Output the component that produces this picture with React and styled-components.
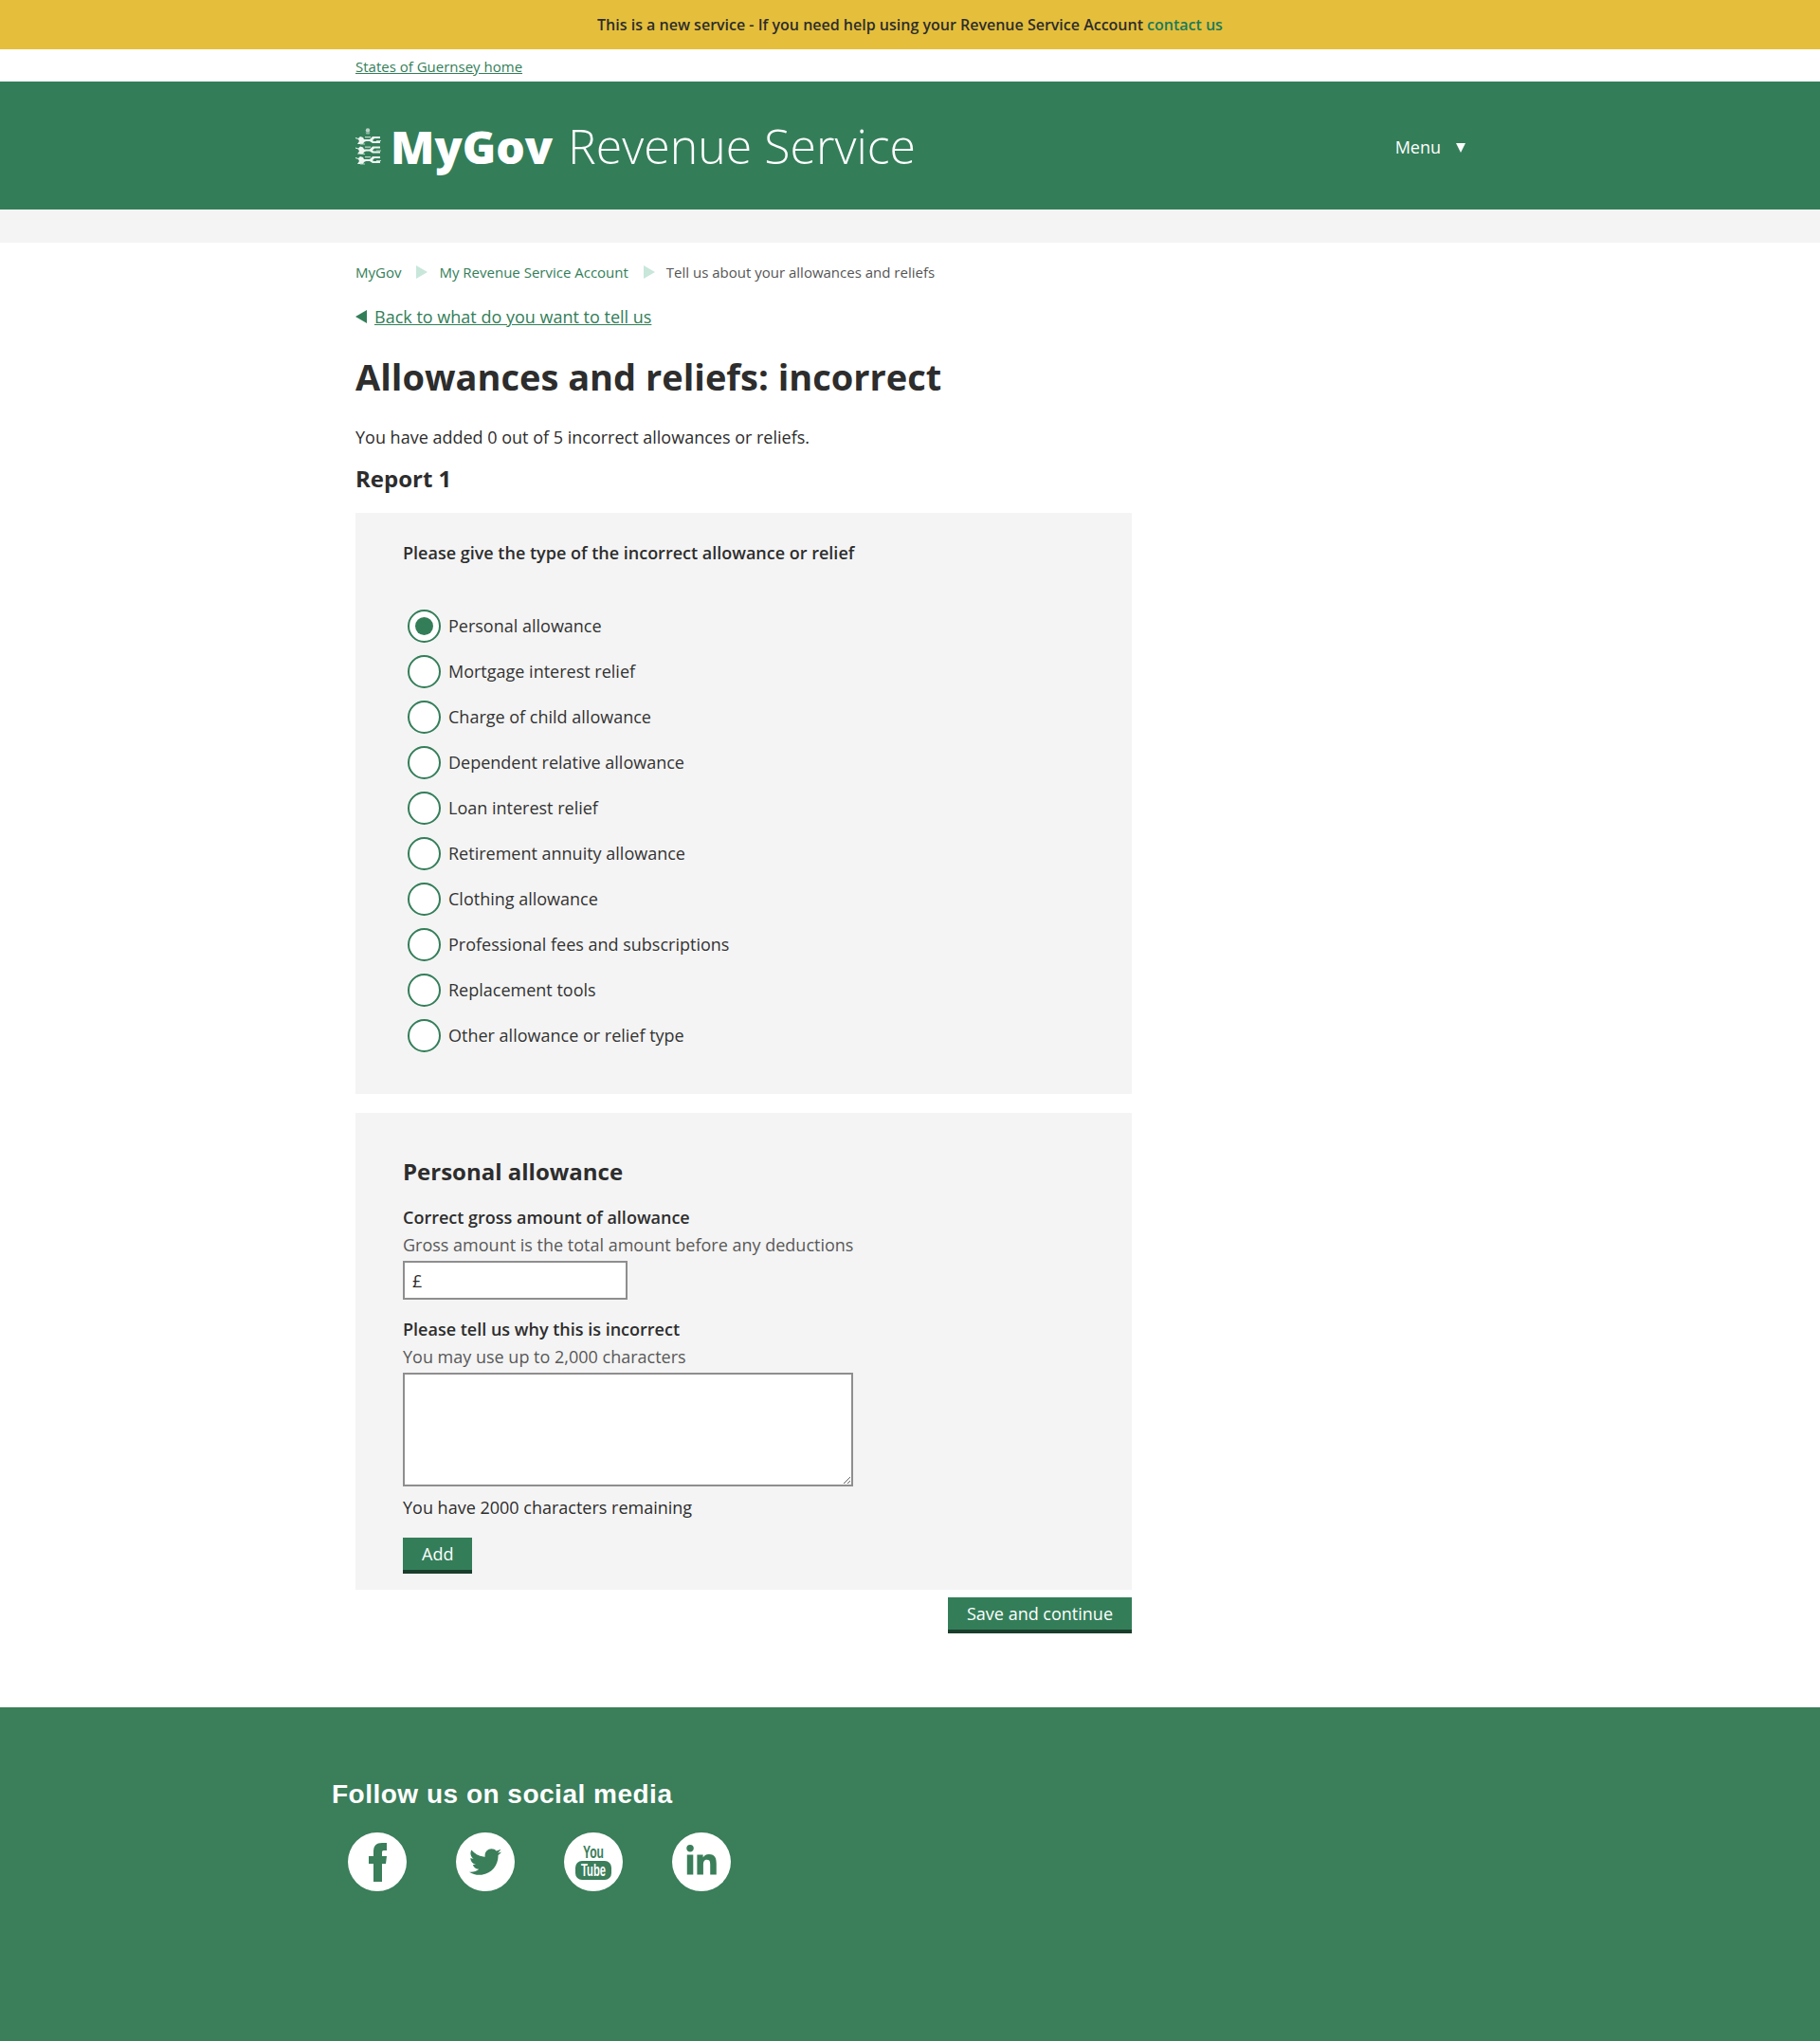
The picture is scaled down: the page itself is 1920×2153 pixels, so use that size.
import React from 'react';
import styled, { createGlobalStyle } from 'styled-components';
import { FaTwitter, FaLinkedinIn } from 'react-icons/fa';

const GlobalStyle = createGlobalStyle`
  html, body { margin: 0; padding: 0; background: #fff; }
  body { font-family: "Open Sans", "Liberation Sans", sans-serif; color: #2d2d2d; }
  * { box-sizing: border-box; }
`;

const green = '#337e59';
const panelGrey = '#f4f4f4';

const Banner = styled.div`
  height: 52px;
  background: #e5bf3b;
  display: flex;
  align-items: center;
  justify-content: center;
  font-size: 16px;
  font-weight: 600;
  color: #2d2d2d;
  a { color: #1b7a5a; text-decoration: none; margin-left: 4px; }
`;

const Wrap = styled.div`
  width: 1170px;
  margin-left: 375px;
`;

const TopLinkRow = styled.div`
  height: 34px;
  display: flex;
  align-items: flex-end;
  padding-bottom: 6px;
  font-size: 15px;
  line-height: 20px;
  a { color: ${green}; }
`;

const Header = styled.header`
  height: 135px;
  background: ${green};
  color: #fff;
`;

const HeaderInner = styled(Wrap)`
  height: 100%;
  display: flex;
  align-items: center;
  justify-content: space-between;
`;

const Logo = styled.div`
  display: flex;
  align-items: center;
  gap: 10px;
  padding-top: 2px;
  font-size: 50px;
  line-height: 60px;
  font-weight: 300;
  white-space: nowrap;
  b { font-size: 48px; font-weight: 800; margin-right: 3px; }
`;

const Menu = styled.div`
  display: flex;
  align-items: center;
  gap: 16px;
  padding-top: 2px;
  font-size: 18px;
  margin-right: -1px;
  &::after {
    content: '';
    margin-top: 2px;
    border-left: 5.5px solid transparent;
    border-right: 5.5px solid transparent;
    border-top: 10px solid #fff;
  }
`;

const GreyStrip = styled.div`
  height: 35px;
  background: ${panelGrey};
`;

const Breadcrumbs = styled.nav`
  display: flex;
  align-items: center;
  height: 22px;
  margin-top: 20px;
  font-size: 15px;
  color: #555;
  a { color: ${green}; text-decoration: none; }
`;

const CrumbArrow = styled.span`
  margin: 0 12px 0 16px;
  border-top: 7px solid transparent;
  border-bottom: 7px solid transparent;
  border-left: 12px solid #c8e6da;
`;

const BackLink = styled.div`
  display: flex;
  align-items: center;
  gap: 8px;
  margin-top: 23px;
  height: 26px;
  font-size: 18px;
  a { color: ${green}; }
  &::before {
    content: '';
    border-top: 7px solid transparent;
    border-bottom: 7px solid transparent;
    border-right: 12px solid ${green};
  }
`;

const Title = styled.h1`
  margin: 25px 0 0;
  font-size: 38px;
  line-height: 50px;
  font-weight: 700;
  color: #2d2d2d;
`;

const Lead = styled.p`
  margin: 26px 0 0;
  font-size: 18px;
  line-height: 26px;
`;

const ReportTitle = styled.h2`
  margin: 15px 0 0;
  font-size: 24px;
  line-height: 32px;
  font-weight: 700;
`;

const Panel = styled.section`
  width: 819px;
  background: ${panelGrey};
  padding: ${p => p.$padding};
  margin-top: ${p => p.$top}px;
`;

const Question = styled.div`
  font-size: 18px;
  line-height: 26px;
  font-weight: 600;
  margin-bottom: 46px;
`;

const RadioList = styled.div`
  display: flex;
  flex-direction: column;
  gap: 12px;
  padding-left: 5px;
`;

const RadioRow = styled.label`
  display: flex;
  align-items: center;
  height: 36px;
  gap: 8px;
  font-size: 18px;
  color: #333;
`;

const RadioMark = styled.span`
  width: 35px;
  height: 35px;
  border-radius: 50%;
  border: 2px solid ${green};
  background: #fff;
  display: flex;
  align-items: center;
  justify-content: center;
  &::after {
    content: '';
    display: ${p => (p.$checked ? 'block' : 'none')};
    width: 19px;
    height: 19px;
    border-radius: 50%;
    background: ${green};
  }
`;

const SubTitle = styled.h3`
  margin: 0;
  font-size: 24px;
  line-height: 32px;
  font-weight: 700;
`;

const FieldLabel = styled.div`
  font-size: 18px;
  line-height: 26px;
  font-weight: 600;
  margin-top: ${p => p.$top}px;
`;

const Hint = styled.div`
  font-size: 18px;
  line-height: 26px;
  color: #595959;
  margin-top: 3px;
`;

const MoneyBox = styled.div`
  width: 237px;
  height: 41px;
  margin-top: 4px;
  border: 2px solid #8e8e8e;
  background: #fff;
  display: flex;
  align-items: center;
  padding-left: 8px;
  font-size: 18px;
`;

const MoneyInput = styled.input`
  flex: 1;
  min-width: 0;
  border: 0;
  outline: 0;
  background: transparent;
  font: inherit;
`;

const TextArea = styled.textarea`
  display: block;
  width: 475px;
  height: 120px;
  margin-top: 4px;
  border: 2px solid #8e8e8e;
  background: #fff;
  border-radius: 0;
`;

const Remaining = styled.div`
  font-size: 18px;
  line-height: 26px;
  margin-top: 9px;
`;

const Button = styled.button`
  display: block;
  height: 38px;
  padding: 0 ${p => p.$pad}px;
  border: 0;
  border-bottom: 4px solid #1a3e2c;
  background: ${green};
  color: #fff;
  font-family: inherit;
  font-size: 18px;
  line-height: 32px;
`;

const AddButton = styled(Button)`
  margin-top: 19px;
`;

const SaveRow = styled.div`
  width: 819px;
  display: flex;
  justify-content: flex-end;
  margin-top: 8px;
`;

const Footer = styled.footer`
  margin-top: 78px;
  height: 352px;
  background: #3a7e5a;
  padding: 75px 0 0 350px;
  color: #fff;
`;

const FollowTitle = styled.h2`
  margin: 0;
  font-family: "Liberation Sans", Arial, sans-serif;
  font-size: 28px;
  line-height: 34px;
  font-weight: 700;
  letter-spacing: 0.5px;
`;

const SocialRow = styled.div`
  display: flex;
  gap: 52px;
  margin: 23px 0 0 17px;
`;

const SocialLink = styled.a`
  width: 62px;
  height: 62px;
  border-radius: 50%;
  background: #fff;
  color: #3a7e5a;
  display: flex;
  align-items: center;
  justify-content: center;
  font-size: ${p => p.$size}px;
`;

// three lions of the Guernsey crest, small enough to read as texture
const Crest = () => (
  <svg width="27" height="39" viewBox="0 0 27 39" aria-hidden="true">
    <circle cx="13" cy="2.5" r="2.2" fill="#b9d4c6" />
    <path d="M10.5 4.5h5l-1 2h-3z" fill="#8fb8a3" />
    {[8, 18.5, 29].map(y => (
      <g key={y} transform={`translate(0 ${y})`}>
        <path
          d="M0 2l3 1 2-2 3 1 1 2h6l3-3h8v2h-6l-2 2 1 1h7v2h-8l-3-2h-4l-2 1-1 2H2l2-3-1-2-3-1z"
          fill="#eef5f1"
        />
        <path d="M10 1h6v1.2h-6zM22 5h5v1h-5zM5 8.5h5v1H5z" fill="#b9d4c6" />
      </g>
    ))}
  </svg>
);

const FacebookMark = () => (
  <svg width="19" height="41" viewBox="0 0 19 41" fill="currentColor" aria-hidden="true">
    <path d="M5 41V22H0v-8h5V9c0-6 3-9 9-9h5v8h-3c-2 0-2 1-2 3v3h5l-1 8h-4v19z" />
  </svg>
);

const YouTubeMark = () => (
  <svg width="38" height="37" viewBox="0 0 38 37" overflow="visible" aria-hidden="true">
    <text
      x="19"
      y="14"
      textAnchor="middle"
      textLength="22"
      lengthAdjust="spacingAndGlyphs"
      fontFamily="Liberation Sans, sans-serif"
      fontWeight="700"
      fontSize="19"
      fill="#3a7e5a"
    >
      You
    </text>
    <rect x="0" y="17" width="38" height="20" rx="7" fill="#3a7e5a" />
    <text
      x="19"
      y="33"
      textAnchor="middle"
      textLength="26"
      lengthAdjust="spacingAndGlyphs"
      fontFamily="Liberation Sans, sans-serif"
      fontWeight="700"
      fontSize="19"
      fill="#fff"
    >
      Tube
    </text>
  </svg>
);

const allowanceTypes = [
  'Personal allowance',
  'Mortgage interest relief',
  'Charge of child allowance',
  'Dependent relative allowance',
  'Loan interest relief',
  'Retirement annuity allowance',
  'Clothing allowance',
  'Professional fees and subscriptions',
  'Replacement tools',
  'Other allowance or relief type',
];

const App = () => (
  <>
    <GlobalStyle />
    <Banner>
      This is a new service - If you need help using your Revenue Service Account
      <a href="#contact">contact us</a>
    </Banner>
    <Wrap>
      <TopLinkRow>
        <a href="#home">States of Guernsey home</a>
      </TopLinkRow>
    </Wrap>
    <Header>
      <HeaderInner>
        <Logo>
          <Crest />
          <span>
            <b>MyGov</b> Revenue Service
          </span>
        </Logo>
        <Menu>Menu</Menu>
      </HeaderInner>
    </Header>
    <GreyStrip />
    <Wrap>
      <Breadcrumbs>
        <a href="#mygov">MyGov</a>
        <CrumbArrow />
        <a href="#account">My Revenue Service Account</a>
        <CrumbArrow />
        Tell us about your allowances and reliefs
      </Breadcrumbs>
      <BackLink>
        <a href="#back">Back to what do you want to tell us</a>
      </BackLink>
      <Title>Allowances and reliefs: incorrect</Title>
      <Lead>You have added 0 out of 5 incorrect allowances or reliefs.</Lead>
      <ReportTitle>Report 1</ReportTitle>
      <Panel $top={20} $padding="29px 50px 44px">
        <Question>Please give the type of the incorrect allowance or relief</Question>
        <RadioList>
          {allowanceTypes.map((label, i) => (
            <RadioRow key={label}>
              <RadioMark $checked={i === 0} />
              {label}
            </RadioRow>
          ))}
        </RadioList>
      </Panel>
      <Panel $top={20} $padding="46px 50px 17px">
        <SubTitle>Personal allowance</SubTitle>
        <FieldLabel $top={19}>Correct gross amount of allowance</FieldLabel>
        <Hint>Gross amount is the total amount before any deductions</Hint>
        <MoneyBox>
          £
          <MoneyInput type="text" />
        </MoneyBox>
        <FieldLabel $top={18}>Please tell us why this is incorrect</FieldLabel>
        <Hint>You may use up to 2,000 characters</Hint>
        <TextArea />
        <Remaining>You have 2000 characters remaining</Remaining>
        <AddButton $pad={20}>Add</AddButton>
      </Panel>
      <SaveRow>
        <Button $pad={20}>Save and continue</Button>
      </SaveRow>
    </Wrap>
    <Footer>
      <FollowTitle>Follow us on social media</FollowTitle>
      <SocialRow>
        <SocialLink href="#facebook">
          <FacebookMark />
        </SocialLink>
        <SocialLink href="#twitter" $size={34}>
          <FaTwitter />
        </SocialLink>
        <SocialLink href="#youtube">
          <YouTubeMark />
        </SocialLink>
        <SocialLink href="#linkedin" $size={36}>
          <FaLinkedinIn />
        </SocialLink>
      </SocialRow>
    </Footer>
  </>
);

export default App;
